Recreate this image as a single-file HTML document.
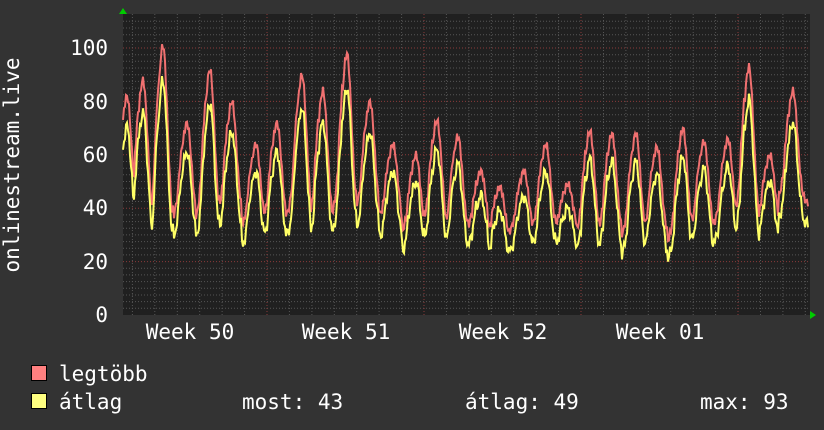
<!DOCTYPE html><html><head><meta charset="utf-8"><style>
body{margin:0;width:824px;height:430px;background:#333;overflow:hidden;font-family:"DejaVu Sans Mono","Liberation Mono",monospace;color:#fff}
</style></head><body>
<svg id="s" width="824" height="430" xmlns="http://www.w3.org/2000/svg" style="position:absolute;left:0;top:0">
<rect x="123" y="14" width="687" height="301" fill="#202020"/>
<g id="grid"></g>
<path d="M119 14 L127 14 L123 8 Z" fill="#0c0"/>
<path d="M810 311 L810 319 L816 315 Z" fill="#0c0"/>
<g id="data"></g>
<g font-family="DejaVu Sans Mono, Liberation Mono, monospace" font-size="21" fill="#fff">
<text x="108" y="322" text-anchor="end">0</text>
<text x="108" y="269" text-anchor="end">20</text>
<text x="108" y="215" text-anchor="end">40</text>
<text x="108" y="162" text-anchor="end">60</text>
<text x="108" y="109" text-anchor="end">80</text>
<text x="108" y="55" text-anchor="end">100</text>
<text x="190" y="339" text-anchor="middle">Week 50</text>
<text x="346" y="339" text-anchor="middle">Week 51</text>
<text x="503" y="339" text-anchor="middle">Week 52</text>
<text x="660" y="339" text-anchor="middle">Week 01</text>
<text transform="translate(19,165) rotate(-90)" text-anchor="middle">onlinestream.live</text>
<text x="59" y="381">legtöbb</text>
<text x="59" y="409">átlag</text>
<text x="242" y="409">most: 43</text>
<text x="465" y="409">átlag: 49</text>
<text x="700" y="409">max: 93</text>
</g>
<rect x="31.5" y="365.5" width="15" height="15" fill="#ff8080" stroke="#000"/>
<rect x="31.5" y="393.5" width="15" height="15" fill="#ffff80" stroke="#000"/>
</svg>
<script>
var g=document.getElementById('grid'),h='';
for(var v=2.5;v<112;v+=2.5){var y=315-v*2.67;var maj=Math.abs(v/20-Math.round(v/20))<1e-6;
h+='<line x1="123" x2="810" y1="'+y.toFixed(1)+'" y2="'+y.toFixed(1)+'" stroke="'+(maj?'#8a3a3a':'#555')+'" stroke-dasharray="1,2"/>';}
for(var i=-6;i<31;i++){var x=267+i*22.43;if(x<124||x>809)continue;var maj=(i%7===0);
h+='<line y1="14" y2="315" x1="'+x.toFixed(1)+'" x2="'+x.toFixed(1)+'" stroke="'+(maj?'#8a3a3a':'#555')+'" stroke-dasharray="1,2"/>';}
g.innerHTML=h;
var pk=[[127,82],[143,88],[163,101],[187,72],[210,92],[232,80],[256,64],[277,72],[302,90],[323,84],[347,98],[370,80],[393,64],[416,60],[437,73],[458,67],[481,54],[500,48],[524,54],[546,64],[568,49],[590,69],[612,68],[636,68],[657,63],[683,70],[704,65],[728,66],[749,93],[770,60],[793,84]];
var tr=[36,34,29,34,32,36,31,33,35,32,35,37,34,29,32,30,31,28,30,31,32,28,29,27,29,26,30,32,34,33,42];
function val(x){var n=0,nd=1e9;for(var i=0;i<pk.length;i++){var dd=Math.abs(x-pk[i][0]+3);if(dd<nd){nd=dd;n=i;}}
var base=tr[n],best=base;
for(var i=0;i<pk.length;i++){var d=x-pk[i][0];var w=d<0?6:4.5;var f=Math.exp(-d*d/(2*w*w));
var plateau=(d>-9&&d<-2)?0.78:0;var v=base+(pk[i][1]-base)*Math.max(f,plateau*(1-Math.abs(d+5)/8));if(v>best)best=v;}return best;}
var p1='',p2='';for(var x=123;x<=808;x++){var v=val(x)+Math.sin(x*2.3)*1.5;var a=v*0.92-5+Math.sin(x*1.1)*1.5;
p1+=x+','+(315-v*2.67).toFixed(1)+' ';p2+=x+','+(315-a*2.67).toFixed(1)+' ';}
document.getElementById('data').innerHTML='<polyline points="'+p1+'" fill="none" stroke="#f07070" stroke-width="2"/><polyline points="'+p2+'" fill="none" stroke="#ffff66" stroke-width="2"/>';
</script>
</body></html>
